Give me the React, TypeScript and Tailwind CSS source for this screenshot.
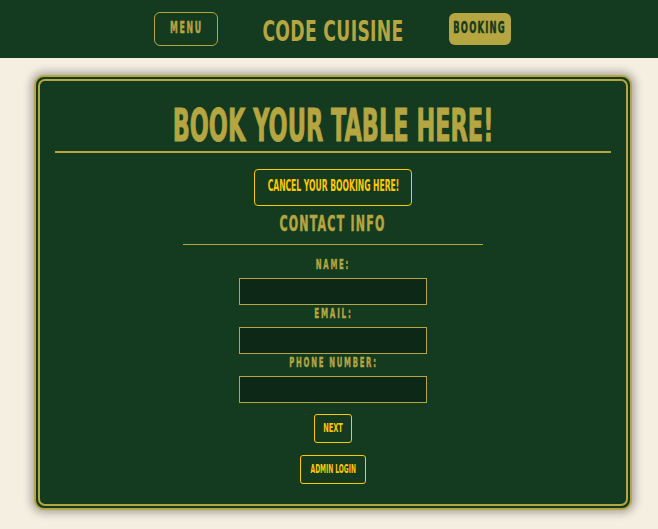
// Bebas-style condensed lettering: DejaVu Sans Condensed Bold squeezed
// horizontally, each text given its own squeeze so widths match.
const display = "font-['DejaVu_Sans_Condensed','DejaVu_Sans',sans-serif] font-bold uppercase whitespace-nowrap";

function Field({ label, squeeze }: { label: string; squeeze: string }) {
  return (
    <div className="flex flex-col items-center">
      <span className={`${display} ${squeeze} inline-block h-[14px] text-[13.5px] leading-[14px] tracking-[3px] text-[#b5a642] [-webkit-text-stroke:0.4px_#b5a642]`}>
        {label}
      </span>
      <input className="mt-[7px] h-[27px] w-[188px] border border-[#b5a642] bg-[#0d2817] outline-none" />
    </div>
  );
}

export default function App() {
  return (
    <div className="min-h-[529px] bg-[#f5efe2]">
      <header className="flex h-[58px] items-center justify-center gap-[46px] bg-[#143b1f] pl-[7px]">
        <button className="flex h-[34px] w-[64px] items-center justify-center rounded-[6px] border border-[#b5a642] pb-[1px]">
          <span className={`${display} inline-block scale-x-[0.58] text-[15px] leading-[15px] tracking-[3px] text-[#b5a642] [-webkit-text-stroke:0.5px_#b5a642]`}>Menu</span>
        </button>
        <h1 className="mt-[5px] flex w-[138px] justify-center">
          <span className={`${display} inline-block scale-x-[0.66] text-[29px] leading-[29px] tracking-[0.5px] text-[#b5a642]`}>
            Code Cuisine
          </span>
        </h1>
        <button className="ml-[1px] flex h-[32px] w-[62px] items-center justify-center rounded-[6px] bg-[#b5a642] pb-[1px]">
          <span className={`${display} inline-block scale-x-[0.62] text-[15px] leading-[15px] tracking-[2px] text-[#143b1f] [-webkit-text-stroke:0.5px_#143b1f]`}>Booking</span>
        </button>
      </header>

      <main className="pt-[17px] pb-[19px] pl-[34px]">
        <div className="w-[598px] rounded-[10px] border-2 border-[#b5a642] bg-[#143b1f] p-[2px] shadow-[0_0_8px_3px_rgba(0,0,0,0.3)]">
          <div className="flex h-[427px] flex-col items-center rounded-[7px] border-2 border-[#b5a642] px-[15px]">
            <h2 className="mt-[22px] flex w-full justify-center">
              <span className={`${display} inline-block scale-x-[0.555] text-[45px] leading-[45px] text-[#b5a642] [-webkit-text-stroke:1px_#b5a642]`}>
                Book your table here!
              </span>
            </h2>
            <div className="mt-[3px] h-[2px] w-full bg-[#b5a642]" />
            <button className="mt-[16px] flex h-[37px] w-[158px] items-center justify-center rounded-[4px] border border-[#ffc800] pb-[3px]">
              <span className={`${display} inline-block scale-x-[0.565] text-[15px] leading-[15px] text-[#ffc800]`}>
                Cancel your booking here!
              </span>
            </button>
            <h3 className="mt-[8px] flex justify-center">
              <span className={`${display} inline-block scale-x-[0.6] text-[20.5px] leading-[21px] tracking-[2px] text-[#b5a642] [-webkit-text-stroke:0.5px_#b5a642]`}>
                Contact Info
              </span>
            </h3>
            <div className="mt-[9px] h-[1px] w-[300px] bg-[#b5a642]" />
            <div className="mt-[12px] flex flex-col gap-[1px]">
              <Field label="Name:" squeeze="scale-x-[0.57]" />
              <Field label="Email:" squeeze="scale-x-[0.59]" />
              <Field label="Phone Number:" squeeze="scale-x-[0.57]" />
            </div>
            <button className="mt-[11px] flex h-[29px] w-[38px] items-center justify-center rounded-[3px] border border-[#ffc800] pb-[2px]">
              <span className={`${display} inline-block scale-x-[0.61] text-[12px] leading-[12px] text-[#ffc800]`}>Next</span>
            </button>
            <button className="mt-[12px] flex h-[29px] w-[66px] items-center justify-center rounded-[3px] border border-[#ffc800] pb-[2px]">
              <span className={`${display} inline-block scale-x-[0.55] text-[12px] leading-[12px] text-[#ffc800]`}>Admin Login</span>
            </button>
          </div>
        </div>
      </main>
    </div>
  );
}
